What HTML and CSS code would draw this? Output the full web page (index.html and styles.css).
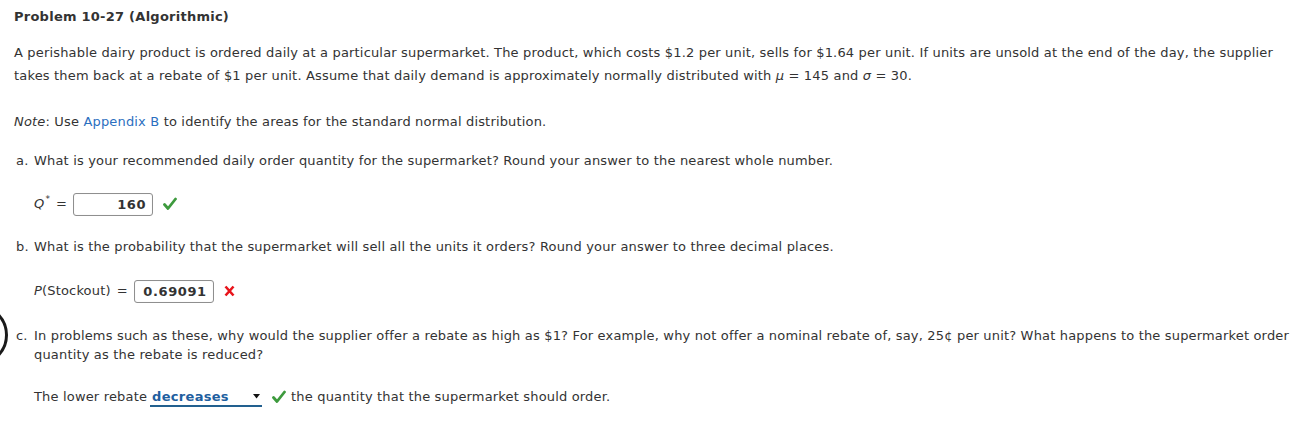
FILE: index.html
```html
<!DOCTYPE html>
<html lang="en">
<head>
<meta charset="utf-8">
<title>Problem 10-27 (Algorithmic)</title>
<link rel="stylesheet" href="styles.css">
</head>
<body>
<div class="ring"></div>
<main class="page">
  <h1 class="title">Problem 10-27 (Algorithmic)</h1>
  <p class="intro">A perishable dairy product is ordered daily at a particular supermarket. The product, which costs $1.2 per unit, sells for $1.64 per unit. If units are unsold at the end of the day, the supplier<br>takes them back at a rebate of $1 per unit. Assume that daily demand is approximately normally distributed with <i class="sym">μ</i> = 145 and <i class="sym">σ</i> = 30.</p>
  <p class="note"><i>Note</i>: Use <a class="link" href="#">Appendix B</a> to identify the areas for the standard normal distribution.</p>

  <section class="part part-a">
    <span class="label">a.</span>
    <div class="body">
      <p class="q">What is your recommended daily order quantity for the supermarket? Round your answer to the nearest whole number.</p>
      <div class="answer">
        <span class="var"><i>Q</i><sup>*</sup></span><span class="eq">=</span>
        <span class="box box-right">160</span>
        <svg class="mark check" width="14" height="14" viewBox="0 0 14 14"><path d="M1.5 7.5 L5 11.5 L12.5 2" fill="none" stroke="#3d9a3d" stroke-width="2.8" stroke-linecap="round" stroke-linejoin="round"/></svg>
      </div>
    </div>
  </section>

  <section class="part part-b">
    <span class="label">b.</span>
    <div class="body">
      <p class="q">What is the probability that the supermarket will sell all the units it orders? Round your answer to three decimal places.</p>
      <div class="answer">
        <span class="var"><i>P</i>(Stockout)</span><span class="eq">=</span>
        <span class="box box-center">0.69091</span>
        <svg class="mark cross" width="11" height="12" viewBox="0 0 11 12"><path d="M1.5 1.5 L9.5 10.5 M9.5 1.5 L1.5 10.5" fill="none" stroke="#e8141b" stroke-width="2.6" stroke-linecap="butt"/></svg>
      </div>
    </div>
  </section>

  <section class="part part-c">
    <span class="label">c.</span>
    <div class="body">
      <p class="q q-tight">In problems such as these, why would the supplier offer a rebate as high as $1? For example, why not offer a nominal rebate of, say, 25¢ per unit? What happens to the supermarket order<br>quantity as the rebate is reduced?</p>
      <div class="answer">
        <span>The lower rebate</span>
        <span class="select">decreases<svg class="caret" width="7" height="5" viewBox="0 0 7 5"><path d="M0 0 H7 L3.5 4.5 Z" fill="#111"/></svg></span>
        <svg class="mark check" width="14" height="14" viewBox="0 0 14 14"><path d="M1.5 7.5 L5 11.5 L12.5 2" fill="none" stroke="#3d9a3d" stroke-width="2.8" stroke-linecap="round" stroke-linejoin="round"/></svg>
        <span>the quantity that the supermarket should order.</span>
      </div>
    </div>
  </section>
</main>
</body>
</html>
```

FILE: styles.css
```css
html, body {
  margin: 0;
  padding: 0;
  background: #ffffff;
}

body {
  font-family: "DejaVu Sans", Verdana, sans-serif;
  font-size: 13px;
  letter-spacing: 0.17px;
  color: #333333;
  position: relative;
  overflow: hidden;
  height: 433px;
}

.page {
  padding: 8px 0 0 14px;
  width: 1280px;
}

.title {
  margin: 0;
  font-size: 13px;
  font-weight: bold;
  letter-spacing: 0.25px;
  line-height: 18px;
}

.intro {
  margin: 15px 0 0;
  line-height: 23px;
  white-space: nowrap;
}

.sym {
  font-style: italic;
}

.note {
  margin: 23px 0 0;
  line-height: 23px;
}

.link {
  color: #2b6fbf;
  text-decoration: none;
}

.part {
  display: flex;
  padding-left: 2px;
  line-height: 20px;
}

.part-a { margin-top: 18px; }
.part-b { margin-top: 21px; }
.part-c { margin-top: 23px; }

.label {
  width: 18px;
  flex: none;
}

.body {
  flex: 1;
}

.q {
  margin: 0;
}

.q-tight {
  line-height: 19px;
  white-space: nowrap;
}

.answer {
  display: flex;
  align-items: center;
  gap: 5px;
  height: 24px;
  margin-top: 21px;
}

.part-b .answer { margin-top: 22px; }
.part-c .answer { margin-top: 21px; }

.var sup {
  font-size: 9px;
  vertical-align: 6px;
  line-height: 0;
  margin-left: 1px;
}

.eq {
  margin: 0 1px;
}

.box {
  box-sizing: border-box;
  width: 80px;
  height: 23px;
  border: 1px solid #8f8f8f;
  border-radius: 3px;
  box-shadow: inset 0 0 1px rgba(0,0,0,0.15);
  font-weight: bold;
  letter-spacing: 0.6px;
  color: #333;
  line-height: 21px;
  padding: 0 6px;
}

.box-right { text-align: right; }
.box-center { text-align: right; }

.mark {
  margin-left: 5px;
  flex: none;
}

.select {
  box-sizing: border-box;
  display: inline-flex;
  align-items: center;
  justify-content: space-between;
  width: 112px;
  height: 19px;
  margin-left: -2px;
  padding: 0 2px 0 2px;
  border-bottom: 2px solid #22608f;
  color: #1f5f9f;
  font-weight: bold;
  letter-spacing: 0.3px;
  font-size: 13px;
  line-height: 17px;
}

.caret {
  flex: none;
}

.part-c .answer .mark {
  margin-left: 5px;
}

.ring {
  position: absolute;
  left: -54px;
  top: 304px;
  width: 56px;
  height: 56px;
  border: 3px solid #1a1a1a;
  border-radius: 50%;
}
```
